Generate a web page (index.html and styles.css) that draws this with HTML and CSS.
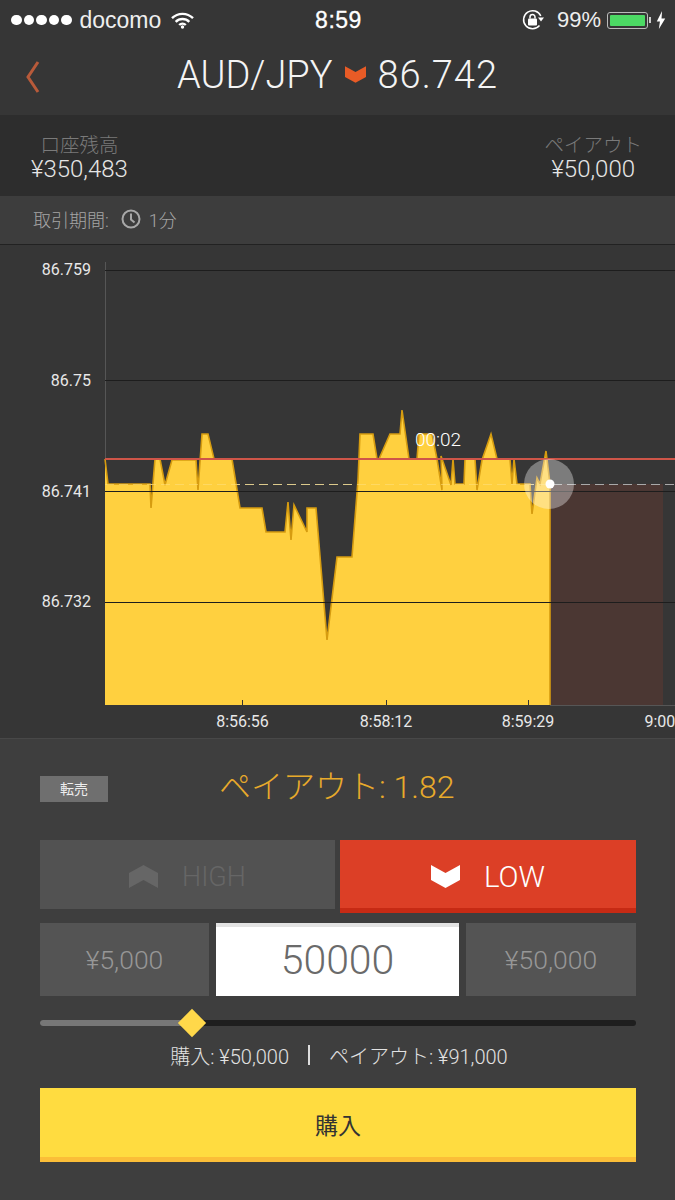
FILE: index.html
```html
<!DOCTYPE html>
<html lang="ja">
<head>
  <meta charset="UTF-8">
  <meta name="viewport" content="width=device-width, initial-scale=1.0">
  <title>AUD/JPY</title>
  <link rel="stylesheet" href="styles.css">
</head>
<body>
  <div class="top">
    <div class="status">
      <div class="status-left">
        <span class="dots"><i></i><i></i><i></i><i></i><i></i></span>
        <span class="carrier">docomo</span>
        <svg class="wifi" width="23" height="17" viewBox="0 0 23 17">
          <path d="M1 6.2a14.8 14.8 0 0 1 21 0" />
          <path d="M4.7 9.8a9.6 9.6 0 0 1 13.6 0" />
          <path d="M8.2 13a4.7 4.7 0 0 1 6.6 0" />
          <circle cx="11.5" cy="15" r="1.7" />
        </svg>
      </div>
      <div class="clock">8:59</div>
      <div class="status-right">
        <svg class="rotlock" width="23" height="22" viewBox="0 0 23 22">
          <path d="M17.5 16.5a9 9 0 1 1 1.3-9.5" />
          <path class="solid" d="M16 8.5h6l-3 4z" />
          <rect class="solid" x="6" y="9.5" width="9" height="7" rx="1" />
          <path d="M8 9.5V8a2.5 2.5 0 0 1 5 0v1.500" />
        </svg>
        <span class="pct">99%</span>
        <span class="battery"><b></b></span>
        <span class="nub"></span>
        <svg class="bolt" width="10" height="18" viewBox="0 0 8 17"><path d="M5 0 0 10h3l-1 7 6-10H4.500z" /></svg>
      </div>
    </div>
    <div class="header">
      <svg class="back" width="16" height="32" viewBox="0 0 16 32"><path d="M13 1 3 16l10 15" /></svg>
      <div class="title">
        <span>AUD/JPY</span>
        <svg class="arrow-small" width="21" height="17" viewBox="0 0 29 23"><path d="M0 0 14.500 8 29 0v15L14.500 23 0 15z" /></svg>
        <span class="rate">86.742</span>
      </div>
    </div>
  </div>

  <div class="balance">
    <div class="bal-col bal-left">
      <div class="bal-label">口座残高</div>
      <div class="bal-value">¥350,483</div>
    </div>
    <div class="bal-col bal-right">
      <div class="bal-label">ペイアウト</div>
      <div class="bal-value">¥50,000</div>
    </div>
  </div>

  <div class="period">
    <span>取引期間:</span>
    <svg class="clock-icon" width="20" height="20" viewBox="0 0 20 20">
      <circle cx="10" cy="10" r="8.500" />
      <path d="M10 4.500V10.500l3.500 3" />
    </svg>
    <span>1分</span>
  </div>

  <div class="chart">
    <svg width="675" height="493" viewBox="0 245 675 493">
      <rect class="future" x="550" y="484" width="113" height="221" />
      <line class="axis" x1="105.500" y1="262" x2="105.500" y2="705" />
      <line class="axis" x1="550" y1="705.500" x2="675" y2="705.500" />
      <line class="dash" x1="105" y1="484.500" x2="675" y2="484.500" />
      <path class="area" d="M105 705V459L108 484H150L151 508 155 459H160L165 485 172 460H196L198 490 202 434H208L214 459H232L240 508H262L266 532H285L288 502 291 540 294 505 307 532V508H316L327 640 337 557H352L358 480 360 434H373L377 459H379L390 434H400L402 410 409 459H417L419 434H432L437 459 442 490 441 456 451 485 453 459 455 484H464L465 459H475L477 490 482 460 491 434 497 459H510L512 484 514 459 517 484H530L532 514 537 478 540 484 546 451 550 484V705z" />
      <path class="area-line" d="M105 459L108 484H150L151 508 155 459H160L165 485 172 460H196L198 490 202 434H208L214 459H232L240 508H262L266 532H285L288 502 291 540 294 505 307 532V508H316L327 640 337 557H352L358 480 360 434H373L377 459H379L390 434H400L402 410 409 459H417L419 434H432L437 459 442 490 441 456 451 485 453 459 455 484H464L465 459H475L477 490 482 460 491 434 497 459H510L512 484 514 459 517 484H530L532 514 537 478 540 484 546 451 550 484V705" />
      <line class="dash-pale" x1="105" y1="484.500" x2="550" y2="484.500" />
      <line class="grid" x1="105" y1="270.500" x2="675" y2="270.500" />
      <line class="grid" x1="105" y1="380.500" x2="675" y2="380.500" />
      <line class="grid" x1="105" y1="491.500" x2="675" y2="491.500" />
      <line class="grid" x1="105" y1="602.500" x2="675" y2="602.500" />
      <line class="strike" x1="105" y1="459" x2="675" y2="459" />
      <line class="tick" x1="242.500" y1="700" x2="242.500" y2="705" />
      <line class="tick" x1="386.500" y1="700" x2="386.500" y2="705" />
      <line class="tick" x1="528.500" y1="700" x2="528.500" y2="705" />
      <line class="tick" x1="671.500" y1="700" x2="671.500" y2="705" />
      <circle class="glow" cx="549" cy="484" r="25" />
      <circle class="dot" cx="550" cy="484" r="4.500" />
      <text class="ylabel" x="91" y="275">86.759</text>
      <text class="ylabel" x="91" y="386">86.75</text>
      <text class="ylabel" x="91" y="497">86.741</text>
      <text class="ylabel" x="91" y="607">86.732</text>
      <text class="xlabel" x="242.500" y="727">8:56:56</text>
      <text class="xlabel" x="386" y="727">8:58:12</text>
      <text class="xlabel" x="528" y="727">8:59:29</text>
      <text class="xlabel-end" x="644.500" y="727">9:00</text>
      <text class="countdown" x="438" y="446">00:02</text>
    </svg>
  </div>

  <div class="panel">
    <div class="payout-row">
      <span class="tag">転売</span>
      <span class="payout">ペイアウト: 1.82</span>
    </div>

    <div class="dir-row">
      <div class="dir dir-high">
        <svg width="29" height="23" viewBox="0 0 29 23"><path d="M0 8 14.500 0 29 8v15L14.500 15 0 23z" /></svg>
        <span>HIGH</span>
      </div>
      <div class="dir dir-low">
        <svg width="29" height="23" viewBox="0 0 29 23"><path d="M0 0 14.500 8 29 0v15L14.500 23 0 15z" /></svg>
        <span>LOW</span>
      </div>
    </div>

    <div class="amount-row">
      <div class="preset">¥5,000</div>
      <div class="amount">50000</div>
      <div class="preset">¥50,000</div>
    </div>

    <div class="slider">
      <div class="slider-fill"></div>
      <div class="slider-thumb"></div>
    </div>

    <div class="summary">
      <span>購入: ¥50,000</span>
      <span class="sep"></span>
      <span>ペイアウト: ¥91,000</span>
    </div>

    <div class="buy">購入</div>
  </div>
</body>
</html>
```

FILE: styles.css
```css
* {
  box-sizing: border-box;
}
body {
  margin: 0;
  width: 675px;
  height: 1200px;
  overflow: hidden;
  background-color: #3e3e3e;
  font-family: Roboto, "Noto Sans CJK JP", sans-serif;
  font-weight: 300;
  color: #fff;
}

/* status bar and title */
.top {
  height: 115px;
  background-color: #363636;
}
.status {
  height: 40px;
  padding: 0 9px 0 11px;
  display: grid;
  grid-template-columns: 1fr auto 1fr;
  align-items: center;
  font-family: "Liberation Sans", sans-serif;
  font-weight: 400;
  font-size: 22px;
}
.status-left, .status-right {
  display: flex;
  align-items: center;
}
.status-right {
  justify-content: flex-end;
}
.dots {
  display: flex;
  gap: 2px;
  margin-right: 8px;
}
.dots i {
  width: 10.500px;
  height: 10.500px;
  border-radius: 50%;
  background-color: #fff;
}
.carrier {
  margin-right: 10px;
  font-size: 23px;
  color: #eee;
}
.wifi path {
  fill: none;
  stroke: #fff;
  stroke-width: 2.400;
}
.wifi circle {
  fill: #fff;
}
.clock {
  font-size: 23px;
  font-weight: 400;
  letter-spacing: 0.500px;
  -webkit-text-stroke: 0.300px #fff;
}
.rotlock {
  margin-right: 12px;
}
.rotlock path {
  fill: none;
  stroke: #fff;
  stroke-width: 1.500;
}
.rotlock .solid {
  fill: #fff;
  stroke: none;
}
.pct {
  margin-right: 6px;
  color: #eee;
}
.battery {
  width: 41px;
  height: 17px;
  padding: 2px;
  border: 1px solid #bbb;
  border-radius: 3px;
  display: flex;
}
.battery b {
  flex: 1;
  background-color: #4cd964;
  border-radius: 1px;
}
.nub {
  width: 2px;
  height: 6px;
  margin-left: 1px;
  margin-right: 5px;
  background-color: #ccc;
}
.bolt path {
  fill: #fff;
}
.header {
  position: relative;
  height: 75px;
  padding-bottom: 6px;
  display: flex;
  justify-content: center;
  align-items: center;
}
.back {
  position: absolute;
  left: 25px;
  top: 21px;
}
.back path {
  fill: none;
  stroke: #b85a3a;
  stroke-width: 3px;
}
.title {
  display: flex;
  align-items: center;
  gap: 12px;
  font-size: 38px;
  color: #f4f4f4;
}
.rate {
  letter-spacing: 1px;
}
.arrow-small path {
  fill: #e85b26;
}

/* balance */
.balance {
  height: 81px;
  padding: 20px 33px 0 31px;
  display: flex;
  justify-content: space-between;
  background-color: #2d2d2d;
}
.bal-col {
  display: flex;
  flex-direction: column;
  align-items: center;
}
.bal-label {
  font-size: 19.500px;
  line-height: 22px;
  color: #7a7a7a;
}
.bal-value {
  font-size: 24px;
  line-height: 25px;
  color: #e6e6e6;
}

/* trade period */
.period {
  height: 49px;
  padding: 0 0 2px 33px;
  display: flex;
  align-items: center;
  gap: 12px;
  font-size: 18px;
  color: #a5a5a5;
  background-color: #3d3d3d;
  border-bottom: 1px solid #222;
}
.period span:last-child {
  margin-left: -4px;
}
.clock-icon circle, .clock-icon path {
  fill: none;
  stroke: #a8a8a8;
  stroke-width: 2px;
}

/* chart */
.chart {
  height: 494px;
  background-color: #363636;
  border-bottom: 1px solid #484848;
}
.chart svg {
  display: block;
}
.future {
  fill: #4b3733;
}
.axis {
  stroke: #565656;
  stroke-width: 1;
}
.area {
  fill: #ffd03f;
}
.area-line {
  fill: none;
  stroke: #d69c10;
  stroke-width: 1.600;
}
.grid {
  stroke: #1d1d1d;
  stroke-width: 1;
}
.dash {
  stroke: #a9a9a9;
  stroke-width: 1;
  stroke-dasharray: 9 5;
}
.dash-pale {
  stroke: #ffe07a;
  stroke-width: 1;
  stroke-dasharray: 9 5;
  opacity: 0.6;
}
.strike {
  stroke: #cf5548;
  stroke-width: 2;
}
.tick {
  stroke: #333;
  stroke-width: 1;
}
.glow {
  fill: #fff;
  opacity: 0.35;
}
.dot {
  fill: #fff;
}
.ylabel, .xlabel, .xlabel-end {
  font-size: 16px;
  font-weight: 400;
  fill: #e8e8e8;
}
.ylabel {
  text-anchor: end;
}
.xlabel {
  text-anchor: middle;
}
.countdown {
  font-size: 19px;
  fill: #fff;
  text-anchor: middle;
}

/* lower panel */
.panel {
  padding: 0 39px 0 40px;
}
.payout-row {
  position: relative;
  height: 101px;
  padding-top: 26px;
  display: flex;
}
.tag {
  width: 68px;
  height: 26px;
  margin-top: 11px;
  font-size: 14px;
  font-weight: 400;
  line-height: 26px;
  text-align: center;
  color: #eee;
  background-color: #6f6f6f;
}
.payout {
  margin-left: 111px;
  font-size: 32px;
  line-height: 44px;
  white-space: nowrap;
  color: #e8aa2b;
}
.dir-row {
  height: 83px;
  display: grid;
  grid-template-columns: 295px 296px;
  gap: 5px;
  align-items: start;
}
.dir {
  display: flex;
  justify-content: center;
  align-items: center;
  gap: 24px;
}
.dir-high {
  height: 69px;
  padding-top: 4px;
  font-size: 27px;
  color: #666;
  background-color: #525252;
}
.dir-high svg path {
  fill: #666;
}
.dir-low {
  height: 73px;
  padding-top: 5px;
  font-size: 29.500px;
  color: #fff;
  background-color: #dc3f26;
  border-bottom: 5px solid #c62a14;
}
.dir-low svg path {
  fill: #fff;
}
.amount-row {
  height: 73px;
  display: grid;
  grid-template-columns: 169px 243px 170px;
  gap: 7px;
}
.preset {
  display: flex;
  justify-content: center;
  align-items: center;
  font-size: 26.500px;
  color: #979797;
  background-color: #545454;
}
.amount {
  padding-bottom: 3px;
  display: flex;
  justify-content: center;
  align-items: center;
  font-size: 41px;
  color: #6a6a6a;
  background-color: #fff;
  border-top: 4px solid #e3e3e3;
}
.slider {
  position: relative;
  height: 6px;
  margin-top: 24px;
  border-radius: 3px;
  background-color: #1e1e1e;
}
.slider-fill {
  width: 152px;
  height: 6px;
  border-radius: 3px 0 0 3px;
  background-color: #777;
}
.slider-thumb {
  position: absolute;
  left: 142px;
  top: -7px;
  width: 20px;
  height: 20px;
  transform: rotate(45deg);
  background-color: #ffd84a;
}
.summary {
  margin-top: 17px;
  padding-left: 2px;
  height: 24px;
  display: flex;
  justify-content: center;
  align-items: center;
  gap: 19px;
  font-size: 20px;
  color: #e2e2e2;
  white-space: nowrap;
}
.sep {
  width: 2px;
  height: 20px;
  background-color: #ddd;
}
.buy {
  height: 74px;
  margin-top: 21px;
  padding-top: 2px;
  display: flex;
  justify-content: center;
  align-items: center;
  font-size: 23px;
  font-weight: 400;
  color: #333;
  background-color: #ffdc40;
  border-bottom: 5px solid #fbbe38;
}
```
